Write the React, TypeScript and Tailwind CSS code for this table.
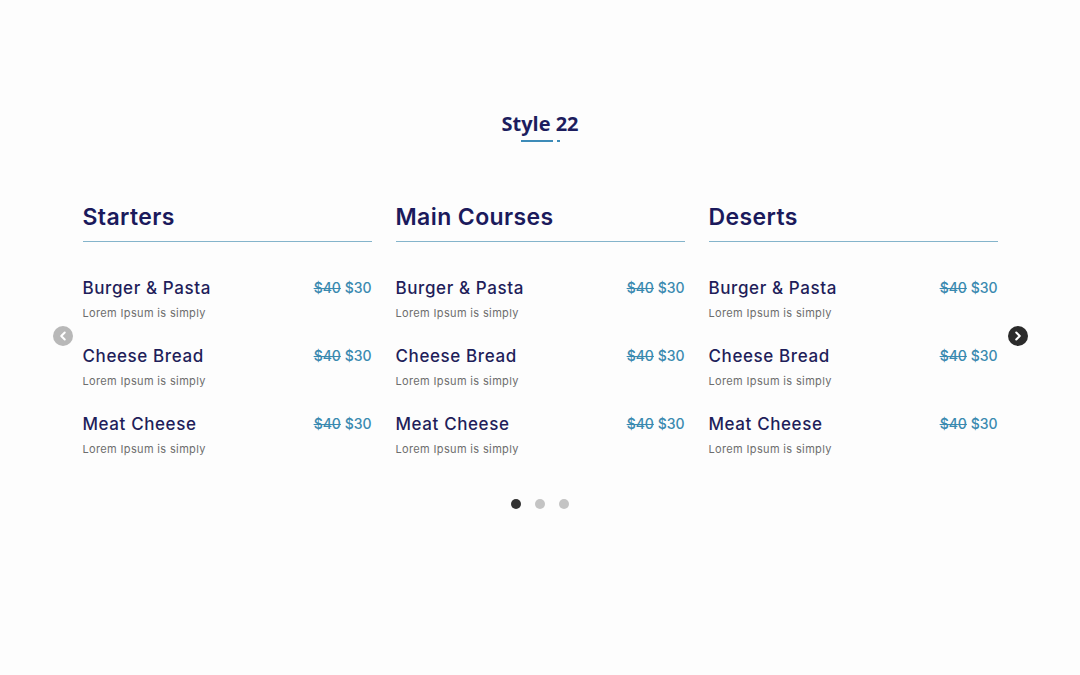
import { ChevronLeft, ChevronRight } from 'lucide-react'

const sections = [
  { title: 'Starters' },
  { title: 'Main Courses' },
  { title: 'Deserts' },
]

const items = ['Burger & Pasta', 'Cheese Bread', 'Meat Cheese']

export default function App() {
  return (
    <div
      className="min-h-screen w-full bg-[#fdfdfd] text-[#1b1a5c]"
      style={{ fontFamily: 'Inter, "Open Sans", sans-serif' }}
    >
      {/* Title */}
      <div className="flex flex-col items-center pt-[110px]">
        <h2
          className="text-[20px] font-bold leading-[28px] text-[#1d1d5e]"
          style={{ fontFamily: '"Open Sans", sans-serif' }}
        >
          Style 22
        </h2>
        <div className="mt-[2px] flex items-center gap-[4px]">
          <span className="block h-[2px] w-[32px] bg-[#3d8bb8]" />
          <span className="block h-[2px] w-[3px] bg-[#3d8bb8]" />
        </div>
      </div>

      {/* Carousel */}
      <div className="mt-[60px] flex items-start justify-center gap-[10px]">
        <button className="mt-[124px] flex h-[20px] w-[20px] items-center justify-center rounded-full bg-[#b8b8b8] text-white">
          <ChevronLeft className="h-[14px] w-[14px]" strokeWidth={3.5} />
        </button>

        <div className="grid w-[915px] grid-cols-3 gap-[24px]">
          {sections.map((s) => (
            <div key={s.title}>
              <h3 className="text-[23px] font-semibold leading-[30px] tracking-[0.4px] text-[#1b1a5c]">{s.title}</h3>
              <div className="mt-[9px] h-px w-full bg-[#84b4cb]" />
              <div className="mt-[34px] flex flex-col gap-[24px]">
                {items.map((name) => (
                  <div key={name}>
                    <div className="flex items-center justify-between">
                      <span className="text-[17px] font-medium leading-[24px] tracking-[0.6px] text-[#1f1e5a]">{name}</span>
                      <span className="text-[14px] font-medium leading-[24px] text-[#3a8ab0]">
                        <span className="line-through">$40</span> $30
                      </span>
                    </div>
                    <p className="mt-[6px] text-[11px] leading-[14px] tracking-[0.35px] text-[#6d6d6d]">Lorem Ipsum is simply</p>
                  </div>
                ))}
              </div>
            </div>
          ))}
        </div>

        <button className="mt-[124px] flex h-[20px] w-[20px] items-center justify-center rounded-full bg-[#2b2b2b] text-white">
          <ChevronRight className="h-[14px] w-[14px]" strokeWidth={3.5} />
        </button>
      </div>

      {/* Dots */}
      <div className="mt-[43px] flex justify-center gap-[14px]">
        <span className="block h-[10px] w-[10px] rounded-full bg-[#333]" />
        <span className="block h-[10px] w-[10px] rounded-full bg-[#c4c4c4]" />
        <span className="block h-[10px] w-[10px] rounded-full bg-[#c4c4c4]" />
      </div>
    </div>
  )
}
